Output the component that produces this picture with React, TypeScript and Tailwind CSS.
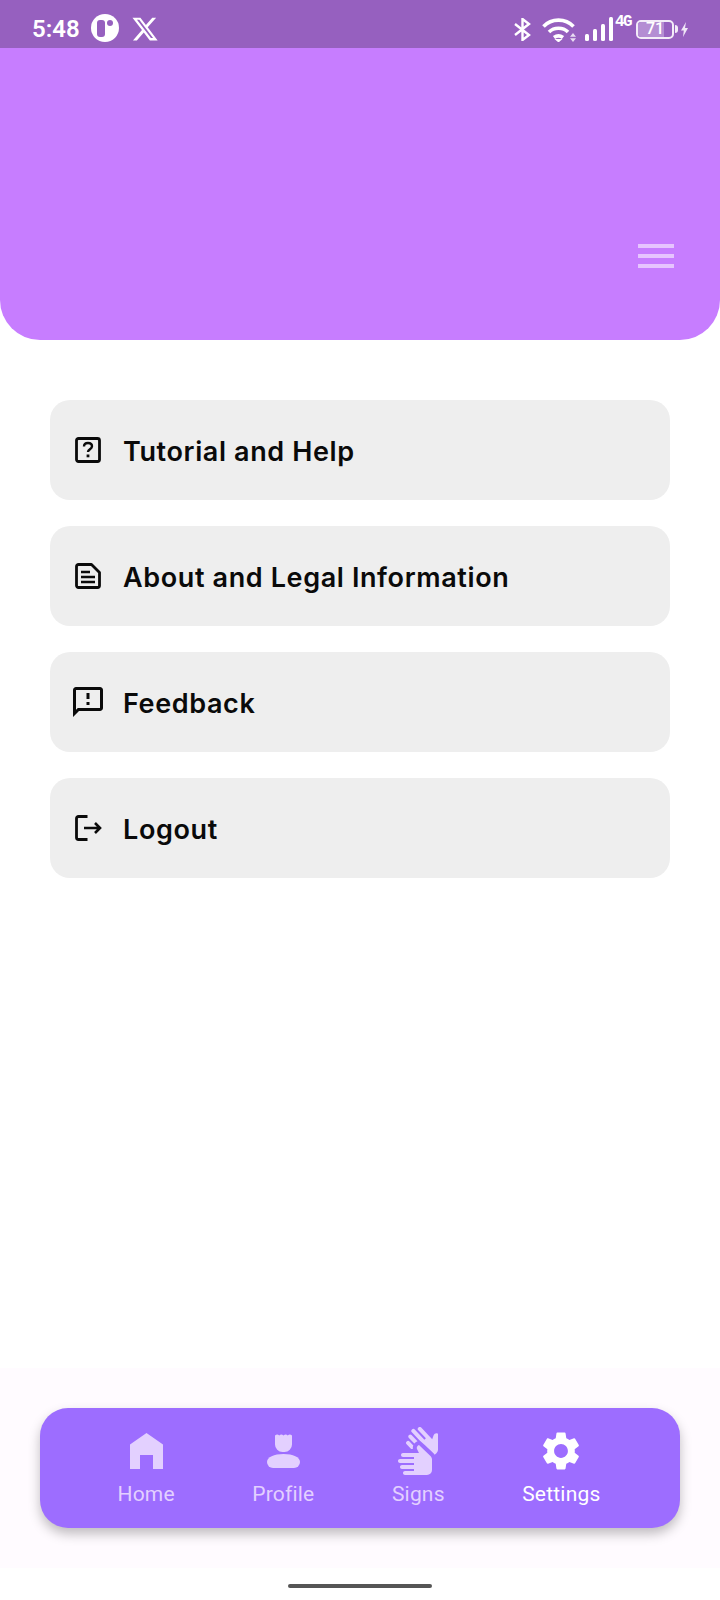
import { FaXTwitter } from 'react-icons/fa6';
import { MdOutlineFeedback, MdSettings, MdSignLanguage } from 'react-icons/md';

const HelpIcon = () => (
	<svg width="28" height="28" viewBox="0 0 28 28" fill="none" stroke="#0a0a0a" strokeWidth="2.800">
		<rect x="2.500" y="2.500" width="23" height="23" rx="2" />
		<path d="M10 10.500c0-2.200 1.700-3.500 4-3.500s4 1.300 4 3.300c0 2.800-4 3-4 5.700" strokeWidth="2.400" />
		<path d="M14 18.500v2.800" strokeWidth="2.800" />
	</svg>
);

const DocIcon = () => (
	<svg width="28" height="28" viewBox="0 0 28 28" fill="none" stroke="#0a0a0a" strokeWidth="2.800">
		<path d="M4.500 2.500h13l8 8v13a2 2 0 0 1-2 2h-19a2 2 0 0 1-2-2v-19a2 2 0 0 1 2-2z" strokeLinejoin="round" />
		<path d="M7 10h9M7 15h14M7 20h14" strokeWidth="2.400" />
	</svg>
);

const LogoutIcon = () => (
	<svg width="28" height="28" viewBox="0 0 28 28" fill="none" stroke="#0a0a0a" strokeWidth="2.800">
		<path d="M13.500 2.500H4.500a2 2 0 0 0-2 2v19a2 2 0 0 0 2 2h9" />
		<path d="M10 14h16M21 9l5 5-5 5" strokeWidth="2.600" />
	</svg>
);

const HomeIcon = () => (
	<svg width="33" height="36" viewBox="0 0 33 36" fill="#e3d0ff">
		<path d="M16.500 0L33 11.500V36H23V22H10V36H0V11.500z" />
	</svg>
);

const ProfileIcon = () => (
	<svg width="33" height="34" viewBox="0 0 33 34" fill="#e3d0ff">
		<path d="M8 1.500c1.500-1.500 3-1.500 4.200 0 1.400-1.500 2.900-1.500 4.300 0 1.400-1.500 2.900-1.500 4.300 0 1.200-1.500 2.700-1.500 4.200 0V10.500a7.500 7.500 0 0 1-7.500 7.500h-2A7.500 7.500 0 0 1 8 10.500z" />
		<path d="M0 28c0-5 7-8 16.500-8S33 23 33 28a6 6 0 0 1-6 6H6a6 6 0 0 1-6-6z" />
	</svg>
);

const BluetoothIcon = () => (
	<svg width="17" height="23" viewBox="0 0 17 23" fill="none" stroke="white" strokeWidth="2.400">
		<path d="M1 6l14 11-6.500 5V1L15 6 1 17" strokeLinejoin="miter" />
	</svg>
);

const StatusIcons = () => (
	<div className="flex items-center">
		<BluetoothIcon />
		<svg className="ml-[11px] shrink-0" width="33" height="25" viewBox="0 0 33 25" fill="none" stroke="white" strokeWidth="3.600">
			<path d="M1.500 9.500c8-8.500 22-8.500 30 0M7 15c5-5 14-5 19 0M12 20.500c3-2.200 6-2.200 9 0" />
			<path d="M12.500 22h8l-4 3.500z" fill="white" stroke="none" />
		</svg>
		<svg width="6" height="9" viewBox="0 0 6 9" fill="#e8dcf2" className="ml-[-5px] mt-[16px] shrink-0">
			<path d="M3 0l3 3.800H0zM3 9l3-3.800H0z" />
		</svg>
		<svg className="ml-[9px] shrink-0" width="28" height="24" viewBox="0 0 28 24" fill="white">
			<rect x="0" y="17" width="4" height="7" rx="1.500" />
			<rect x="8" y="12" width="4" height="12" rx="1.500" />
			<rect x="16" y="7" width="4" height="17" rx="1.500" />
			<rect x="24" y="0" width="4" height="24" rx="1.500" />
		</svg>
		<span className="ml-[2px] w-[17px] mb-[15px] font-['Liberation_Mono',monospace] text-[16px] leading-none font-bold text-white tracking-[-1.5px]">4G</span>
		<div className="relative ml-[4px] w-[38px] h-[19px] rounded-[5px] border-2 border-[#f3ecf8] overflow-hidden">
			<div className="h-full w-[26px] bg-[#b48dd3]"></div>
			<span className="absolute inset-0 flex items-center justify-center font-['Roboto',sans-serif] text-[16px] font-medium text-white">71</span>
		</div>
		<div className="w-[3px] h-[8px] bg-[#f3ecf8] rounded-r-sm ml-[1px]"></div>
		<svg className="ml-[3px] mt-[1px] shrink-0" width="7" height="15" viewBox="0 0 7 15" fill="#efe6f6">
			<path d="M5 0L0 8.500h2.800L2 15 7 6H4z" />
		</svg>
	</div>
);

const StatusBar = () => (
	<div className="h-12 bg-[#9660bf] flex items-center justify-between pt-[10px] pl-[32px] pr-[32px] text-white">
		<div className="flex items-center">
			<span className="font-['Roboto',sans-serif] text-[24px] font-semibold w-[59px]">5:48</span>
			<div className="w-[28px] h-[28px] rounded-full bg-white flex items-start justify-center gap-[2px] pt-[6px] mt-[-2px]">
				<div className="w-[8px] h-[17px] rounded-[3px] bg-[#9660bf]"></div>
				<div className="w-[6px] h-[6px] rounded-full bg-[#9660bf]"></div>
			</div>
			<FaXTwitter className="ml-[12px] mt-[-1px]" size={28} />
		</div>
		<StatusIcons />
	</div>
);

const rows = [
	{ label: 'Tutorial and Help', icon: <HelpIcon /> },
	{ label: 'About and Legal Information', icon: <DocIcon /> },
	{ label: 'Feedback', icon: <MdOutlineFeedback size={36} color="#0a0a0a" className="shrink-0" /> },
	{ label: 'Logout', icon: <LogoutIcon /> },
];

const tabs = [
	{ label: 'Home', icon: <HomeIcon /> },
	{ label: 'Profile', icon: <ProfileIcon /> },
	{ label: 'Signs', icon: <MdSignLanguage size={48} color="#e3d0ff" /> },
	{ label: 'Settings', icon: <MdSettings size={46} color="#ffffff" />, active: true },
];

export default function App() {
	return (
		<div className="w-[720px] h-[1600px] bg-white flex flex-col overflow-hidden">
			<header className="h-[340px] bg-[#c77dff] rounded-b-[40px] flex flex-col">
				<StatusBar />
				<div className="flex justify-end pt-[196px] pr-[46px]">
					<div className="w-[36px] flex flex-col gap-[6px]">
						<div className="h-1 bg-[#e6c4ff]"></div>
						<div className="h-1 bg-[#e6c4ff]"></div>
						<div className="h-1 bg-[#e6c4ff]"></div>
					</div>
				</div>
			</header>

			<main className="flex-1 flex flex-col gap-[26px] pt-[60px] px-[50px]">
				{rows.map((row) => (
					<div key={row.label} className="h-[100px] bg-[#eeeeee] rounded-[20px] flex items-center pl-[24px]">
						<div className="w-[28px] flex items-center justify-center">{row.icon}</div>
						<span className="ml-[21px] pt-1 font-['Inter',sans-serif] text-[27px] font-semibold tracking-[0.62px] text-[#0a0a0a]">
							{row.label}
						</span>
					</div>
				))}
			</main>

			<div className="h-[200px] bg-[#fffbff] px-[40px] pt-[40px]">
				<nav className="h-[120px] bg-[#9d6dff] rounded-[28px] shadow-[0_6px_12px_rgba(0,0,0,0.25)] flex items-center justify-evenly pr-[2px] pb-[2px]">
					{tabs.map((tab) => (
						<div key={tab.label} className="flex flex-col items-center gap-[5px]">
							<div className="h-[48px] flex items-center justify-center">{tab.icon}</div>
							<span className={`font-['Roboto',sans-serif] text-[21px] leading-[28px] tracking-[0.2px] ${tab.active ? 'text-white' : 'text-[#e3d0ff]'}`}>
								{tab.label}
							</span>
						</div>
					))}
				</nav>
			</div>

			<div className="h-[32px] flex justify-center items-start pt-[16px]">
				<div className="w-[144px] h-1 rounded-full bg-[#555555]"></div>
			</div>
		</div>
	);
}
